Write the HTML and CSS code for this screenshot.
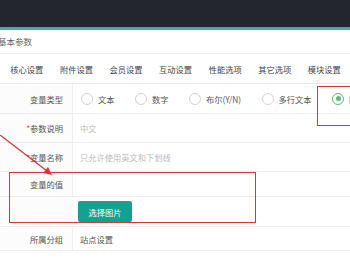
FILE: index.html
```html
<!DOCTYPE html>
<html lang="zh-CN">
<head>
  <meta charset="UTF-8">
  <title>基本参数</title>
  <link rel="stylesheet" href="styles.css">
</head>
<body>
  <div class="topbar"></div>

  <div class="page-title">基本参数</div>

  <div class="tabs">
    <span class="tab">核心设置</span>
    <span class="tab">附件设置</span>
    <span class="tab">会员设置</span>
    <span class="tab">互动设置</span>
    <span class="tab">性能选项</span>
    <span class="tab">其它选项</span>
    <span class="tab">模块设置</span>
  </div>

  <div class="form">
    <div class="row row-type">
      <div class="label">变量类型</div>
      <div class="field radios">
        <label class="radio"><i class="dot"></i>文本</label>
        <label class="radio"><i class="dot"></i>数字</label>
        <label class="radio"><i class="dot"></i>布尔(Y/N)</label>
        <label class="radio"><i class="dot"></i>多行文本</label>
        <label class="radio checked"><i class="dot"></i>图片</label>
      </div>
    </div>
    <div class="row">
      <div class="label"><span class="req">*</span>参数说明</div>
      <div class="field placeholder">中文</div>
    </div>
    <div class="row">
      <div class="label"><span class="req">*</span>变量名称</div>
      <div class="field placeholder">只允许使用英文和下划线</div>
    </div>
    <div class="row row-value">
      <div class="label">变量的值</div>
      <div class="field"></div>
    </div>
    <div class="row row-button">
      <div class="label blank"></div>
      <div class="field"><button class="btn">选择图片</button></div>
    </div>
    <div class="row row-group">
      <div class="label">所属分组</div>
      <div class="field">站点设置</div>
    </div>
  </div>

  <!-- annotations drawn over the screenshot -->
  <div class="mark mark-radio"></div>
  <div class="mark mark-value"></div>
  <svg class="arrow" width="60" height="60" viewBox="0 0 60 60">
    <line x1="0" y1="0" x2="47" y2="36" stroke="#d8363a" stroke-width="1.3"/>
    <polygon points="52,40 43,38 48,32" fill="#d8363a"/>
  </svg>
</body>
</html>
```

FILE: styles.css
```css
body {
  margin: 0;
  width: 350px;
  height: 280px;
  overflow: hidden;
  position: relative;
  background: #fff;
  font-family: "Noto Sans CJK SC", "Noto Sans", sans-serif;
  font-size: 8.25px;
  color: #555;
}
.topbar {
  height: 27px;
  background: #23262e;
  border-bottom: 3px solid #4da8a3;
}
.page-title {
  height: 23px;
  line-height: 22px;
  text-indent: -2px;
  color: #666;
  font-size: 8.5px;
  border-bottom: 1px solid #eee;
}
.tabs {
  display: flex;
  height: 29px;
  align-items: center;
  padding-left: 2px;
  border-bottom: 1px solid #e6e6e6;
  color: #444;
}
.tab {
  padding: 0 8.3px;
  white-space: nowrap;
}
.row {
  display: grid;
  grid-template-columns: 73px 1fr;
  border-bottom: 1px solid #eee;
  height: 28px;
}
.label {
  display: flex;
  align-items: center;
  justify-content: flex-end;
  padding-right: 9px;
  border-right: 1px solid #eee;
  background: #fcfcfc;
  color: #555;
}
.label.blank {
  border-right: none;
}
.req {
  color: #e2524a;
}
.field {
  display: flex;
  align-items: center;
  padding-left: 7px;
  color: #555;
  white-space: nowrap;
  overflow: hidden;
}
.placeholder {
  color: #bbb;
}
.row-type {
  height: 29px;
}
.row-value {
  height: 24px;
}
.row-button {
  height: 29px;
}
.row-group {
  height: 23px;
}
.radio {
  display: flex;
  align-items: center;
  margin-right: 19.5px;
}
.dot {
  width: 10px;
  height: 10px;
  border: 1px solid #d2d2d2;
  border-radius: 50%;
  margin: 0 5px 0 1px;
  position: relative;
}
.radio.checked .dot {
  border-color: #5fb878;
}
.radio.checked .dot::after {
  content: "";
  position: absolute;
  left: 2.5px;
  top: 2.5px;
  width: 5px;
  height: 5px;
  border-radius: 50%;
  background: #5fb878;
}
.btn {
  width: 54px;
  height: 21px;
  padding: 0;
  border: none;
  border-radius: 2px;
  background: #16a092;
  color: #fff;
  font-family: inherit;
  font-size: 8.25px;
  margin-left: -2px;
}
.mark {
  position: absolute;
  border: 1.5px solid #d8363a;
  box-sizing: border-box;
}
.mark-radio {
  left: 317px;
  top: 86px;
  width: 40px;
  height: 40px;
}
.mark-value {
  left: 9px;
  top: 172px;
  width: 247px;
  height: 51px;
}
.arrow {
  position: absolute;
  left: 0;
  top: 135px;
}
```
